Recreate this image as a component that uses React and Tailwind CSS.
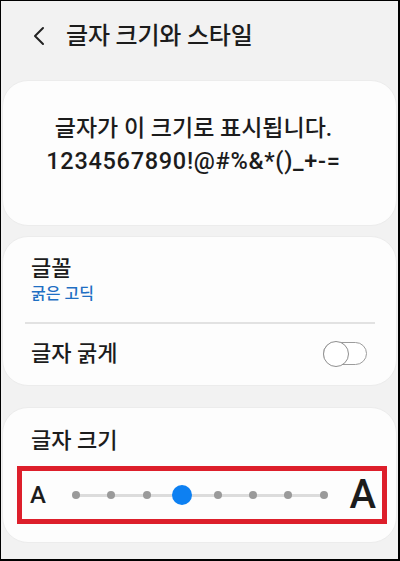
const font = { fontFamily: 'Roboto, "Noto Sans CJK KR", sans-serif' };

function BackIcon() {
  return (
    <svg width="14" height="20" viewBox="0 0 14 20" fill="none">
      <path d="M11 2 L3 10 L11 18" stroke="#222" strokeWidth="2" strokeLinecap="round" strokeLinejoin="round" />
    </svg>
  );
}

function Toggle() {
  return (
    <div className="relative w-[44px] h-[23px] rounded-full border-[1.5px] border-[#9c9c9c] bg-white">
      <div className="absolute left-[-1.5px] top-[-2.5px] w-[26px] h-[26px] rounded-full border-[1.5px] border-[#8f8f8f] bg-white" />
    </div>
  );
}

function SizeSlider({ steps = 8, value = 3 }) {
  return (
    <div className="relative w-[268px] h-[24px] flex items-center justify-between">
      <div className="absolute left-[10px] right-[10px] top-[10.5px] h-[3px] bg-[#dcdcdc]" />
      {Array.from({ length: steps }).map((_, i) => (
        <div key={i} className="relative w-[20px] h-[20px] flex items-center justify-center">
          {i === value ? (
            <div className="w-[20px] h-[20px] rounded-full bg-[#0d80f2]" />
          ) : (
            <div className="w-[8px] h-[8px] rounded-full bg-[#9a9a9a]" />
          )}
        </div>
      ))}
    </div>
  );
}

export default function App() {
  return (
    <div
      className="w-[400px] h-[561px] overflow-hidden bg-[#f2f2f2] border-l border-t border-r-2 border-b-2 border-black text-[#1c1c1c]"
      style={font}
    >
      {/* header */}
      <div className="h-[79px] flex items-center pl-[31px] pb-[10px]">
        <BackIcon />
        <span className="ml-[20px] text-[24px] font-medium tracking-[-0.2px]">글자 크기와 스타일</span>
      </div>

      {/* preview */}
      <div className="mx-[1px] h-[146px] rounded-[26px] bg-[#fdfdfd] border border-[#ececec] pt-[31px] pr-[12px] text-center leading-[33px] font-medium">
        <div className="text-[23px]">글자가 이 크기로 표시됩니다.</div>
        <div className="text-[23.5px] tracking-[0.7px]">1234567890!@#%&amp;*()_+-=</div>
      </div>

      {/* font settings */}
      <div className="mx-[1px] mt-[10px] h-[150px] rounded-[26px] bg-[#fdfdfd] border border-[#ececec] pt-[18px]">
        <div className="px-[28px]">
          <div className="text-[22px] leading-[28px] font-medium">글꼴</div>
          <div className="text-[16px] leading-[21px] font-medium text-[#1f6fc3]">굵은 고딕</div>
        </div>
        <div className="ml-[22px] mr-[21px] mt-[18px] h-[1.5px] bg-[#e2e2e2]" />
        <div className="h-[60px] flex items-center justify-between pl-[28px] pr-[29px]">
          <span className="text-[22px] font-medium">글자 굵게</span>
          <Toggle />
        </div>
      </div>

      {/* size */}
      <div className="mx-[1px] mt-[21px] h-[136px] rounded-[26px] bg-[#fdfdfd] border border-[#ececec] pt-[19px]">
        <div className="px-[28px] text-[22px] leading-[28px] font-medium">글자 크기</div>
        <div className="ml-[14px] mr-[9px] mt-[11px] h-[58px] border-[5px] border-[#dd1f2b] flex items-center">
          <span className="ml-[8px] text-[24px] font-medium leading-none">A</span>
          <div className="ml-[20px]">
            <SizeSlider />
          </div>
          <span className="ml-auto mr-[6px] text-[40px] font-medium leading-none">A</span>
        </div>
      </div>
    </div>
  );
}
